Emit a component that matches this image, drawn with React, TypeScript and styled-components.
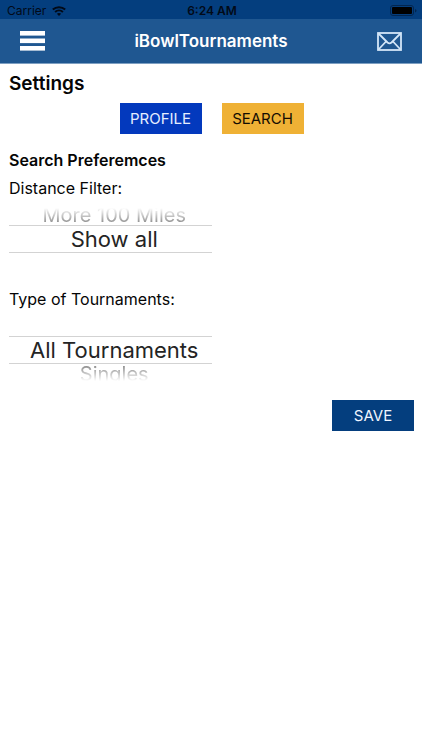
import React, { useState } from "react";
import styled, { createGlobalStyle } from "styled-components";

const GlobalStyle = createGlobalStyle`
  *, *::before, *::after { box-sizing: border-box; }
  body {
    margin: 0;
    background: #fff;
    color: #050505;
    font-family: Inter, "Liberation Sans", sans-serif;
  }
`;

const Page = styled.div`
  display: flex;
  flex-direction: column;
  min-height: 100vh;
`;

const StatusBar = styled.div`
  display: grid;
  grid-template-columns: 1fr auto 1fr;
  align-items: center;
  height: 19px;
  padding: 3px 5px 0 7px;
  background: #043e7e;
  color: #020a18;
  font-size: 12px;
  line-height: 16px;
`;

const Carrier = styled.span`
  display: flex;
  align-items: center;
  gap: 6px;
`;

const Clock = styled.span`
  font-weight: 600;
`;

const Battery = styled.svg`
  justify-self: end;
`;

const NavBar = styled.header`
  display: grid;
  grid-template-columns: 1fr auto 1fr;
  align-items: center;
  height: 45px;
  padding: 0 20px;
  background: #1f5791;
  border-bottom: 1px solid #7d9fc2;
`;

const NavTitle = styled.h1`
  margin: 0;
  color: #fff;
  font-size: 17px;
  font-weight: 600;
  line-height: 24px;
`;

const IconButton = styled.button<{ $side: "start" | "end" }>`
  display: flex;
  justify-self: ${(p) => p.$side};
  padding: 0;
  border: 0;
  background: none;
  cursor: pointer;
`;

const Content = styled.main`
  display: flex;
  flex-direction: column;
  padding: 8px 8px 24px 9px;
`;

const PageTitle = styled.h2`
  margin: 0;
  font-size: 19px;
  font-weight: 600;
  line-height: 24px;
`;

const TabRow = styled.div`
  display: flex;
  justify-content: center;
  gap: 20px;
  padding: 7px 0 16px;
`;

const tones = {
  blue: { back: "#0339bd", text: "#e6eeff" },
  amber: { back: "#efb135", text: "#140d02" },
  navy: { back: "#043e7e", text: "#f0f6ff" },
};

const ActionButton = styled.button<{ $tone: keyof typeof tones }>`
  width: 82px;
  height: 31px;
  padding: 0;
  border: 0;
  background: ${(p) => tones[p.$tone].back};
  color: ${(p) => tones[p.$tone].text};
  font-family: inherit;
  font-size: 15px;
  line-height: 20px;
  cursor: pointer;
`;

const SectionTitle = styled.h3`
  margin: 0 0 8px;
  font-size: 16px;
  font-weight: 600;
  line-height: 20px;
`;

const Field = styled.fieldset`
  min-width: 0;
  margin: 0 0 16px;
  padding: 0;
  border: 0;
`;

const FieldLabel = styled.legend`
  padding: 0;
  font-size: 16px;
  line-height: 20px;
`;

const Wheel = styled.div`
  display: grid;
  grid-template-rows: 20px 28px 20px;
  width: 50%;
  margin-top: 7px;
`;

const wheelSlots = {
  above: `
    grid-row: 1;
    mask-image: linear-gradient(to bottom, transparent 3px, #000);
  `,
  current: `
    grid-row: 2;
    border-top: 1px solid #d3d3d3;
    border-bottom: 1px solid #d3d3d3;
  `,
  below: `
    grid-row: 3;
    mask-image: linear-gradient(to top, transparent 3px, #000);
  `,
};

const WheelOption = styled.label<{ $slot: keyof typeof wheelSlots }>`
  display: flex;
  align-items: center;
  justify-content: center;
  padding-left: 8px;
  color: ${(p) => (p.$slot === "current" ? "#242424" : "#808080")};
  font-size: ${(p) => (p.$slot === "current" ? 22 : 20)}px;
  line-height: ${(p) => (p.$slot === "current" ? 26 : 20)}px;
  white-space: nowrap;
  cursor: pointer;
  ${(p) => wheelSlots[p.$slot]}
`;

const WheelInput = styled.input`
  appearance: none;
  width: 0;
  height: 0;
  margin: 0;
`;

const Actions = styled.div`
  display: flex;
  justify-content: flex-end;
`;

function WheelPicker({ label, name, options, initial }: {
  label: string;
  name: string;
  options: string[];
  initial: number;
}) {
  const [selected, setSelected] = useState(initial);
  return (
    <Field>
      <FieldLabel>{label}</FieldLabel>
      <Wheel>
        {options.map((option, index) => {
          const distance = index - selected;
          if (Math.abs(distance) > 1) return null;
          const slot = distance < 0 ? "above" : distance > 0 ? "below" : "current";
          return (
            <WheelOption key={option} $slot={slot}>
              <WheelInput
                type="radio"
                name={name}
                value={option}
                checked={distance === 0}
                onChange={() => setSelected(index)}
              />
              {option}
            </WheelOption>
          );
        })}
      </Wheel>
    </Field>
  );
}

export default function App() {
  return (
    <>
      <GlobalStyle />
      <Page>
        <StatusBar>
          <Carrier>
            Carrier
            <svg width="14" height="10" viewBox="0 0 14 10" fill="none" stroke="currentColor" strokeWidth="2" aria-hidden="true">
              <path d="M0.8 3.6C4.3 0.3 9.7 0.3 13.2 3.6" />
              <path d="M3.1 6.1C5.3 4.1 8.7 4.1 10.9 6.1" />
              <path d="M7 10L4.9 7.8C6.1 6.8 7.9 6.8 9.1 7.8Z" fill="currentColor" stroke="none" />
            </svg>
          </Carrier>
          <Clock>6:24 AM</Clock>
          <Battery width="27" height="12" viewBox="0 0 27 12" aria-hidden="true">
            <rect x="0.5" y="0.5" width="23" height="10" rx="2.5" fill="none" stroke="#03264f" />
            <rect x="2" y="2" width="20" height="7" rx="1" fill="#000" />
            <path d="M25 4v3.500q1.500-.4 1.500-1.750T25 4Z" fill="#03264f" />
          </Battery>
        </StatusBar>
        <NavBar>
          <IconButton type="button" aria-label="Menu" $side="start">
            <svg width="25" height="20" viewBox="0 0 25 20" fill="#fff" aria-hidden="true">
              <rect width="25" height="4.600" y="0" />
              <rect width="25" height="4.600" y="7.500" />
              <rect width="25" height="4.600" y="15" />
            </svg>
          </IconButton>
          <NavTitle>iBowlTournaments</NavTitle>
          <IconButton type="button" aria-label="Messages" $side="end">
            <svg width="25" height="19" viewBox="0 0 25 19" fill="none" stroke="#d3e6f8" strokeWidth="1.800" aria-hidden="true">
              <rect x="1" y="1" width="23" height="17" />
              <path d="M1.500 1.500L10.500 10.500Q12.500 12.200 14.500 10.500L23.500 1.500M1.500 17.500L9 9.500M23.500 17.500L16 9.500" />
            </svg>
          </IconButton>
        </NavBar>
        <Content>
          <PageTitle>Settings</PageTitle>
          <TabRow>
            <ActionButton type="button" $tone="blue">PROFILE</ActionButton>
            <ActionButton type="button" $tone="amber">SEARCH</ActionButton>
          </TabRow>
          <SectionTitle>Search Preferemces</SectionTitle>
          <WheelPicker
            label="Distance Filter:"
            name="distance"
            options={["More 100 Miles", "Show all"]}
            initial={1}
          />
          <WheelPicker
            label="Type of Tournaments:"
            name="type"
            options={["All Tournaments", "Singles"]}
            initial={0}
          />
          <Actions>
            <ActionButton type="submit" $tone="navy">SAVE</ActionButton>
          </Actions>
        </Content>
      </Page>
    </>
  );
}
